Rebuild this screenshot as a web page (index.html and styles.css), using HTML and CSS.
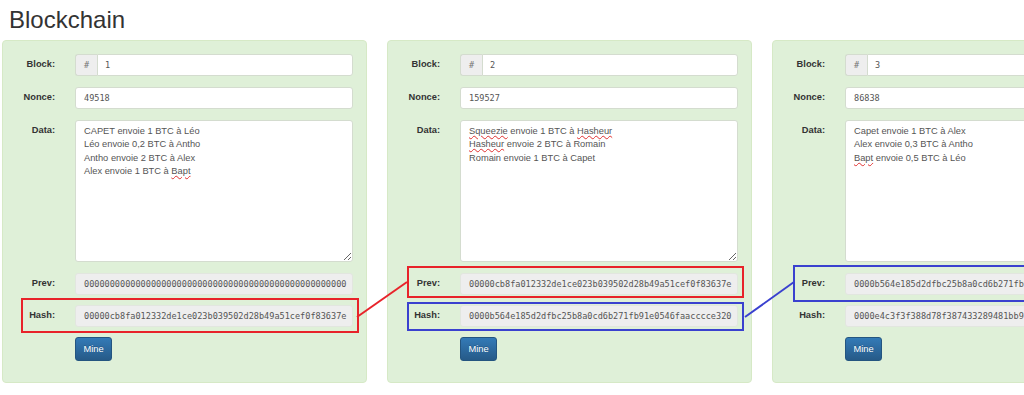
FILE: index.html
```html
<!DOCTYPE html>
<html lang="fr">

<head>
  <meta charset="UTF-8" />
  <meta name="viewport" content="width=device-width, initial-scale=1.0" />
  <title>Blockchain</title>
  <link rel="stylesheet" href="styles.css">
</head>

<body>
  <div class="page">
    <h1>Blockchain</h1>

    <!-- Chain of blocks -->
    <div class="chain">

      <div class="block">
        <div class="row">
          <label>Block:</label>
          <div class="input-group">
            <span class="addon">#</span>
            <input type="text" class="field mono" value="1">
          </div>
        </div>
        <div class="row">
          <label>Nonce:</label>
          <input type="text" class="field mono" value="49518">
        </div>
        <div class="row">
          <label>Data:</label>
          <div class="data">CAPET envoie 1 BTC à Léo<br>Léo envoie 0,2 BTC à Antho<br>Antho envoie 2 BTC à Alex<br>Alex envoie 1 BTC à <span class="typo">Bapt</span></div>
        </div>
        <div class="row prev">
          <label>Prev:</label>
          <input type="text" class="field mono" readonly value="000000000000000000000000000000000000000000000000000">
        </div>
        <div class="row hash mark red">
          <label>Hash:</label>
          <input type="text" class="field mono" readonly value="00000cb8fa012332de1ce023b039502d28b49a51cef0f83637e">
        </div>
        <button class="btn-mine">Mine</button>
      </div>

      <div class="block">
        <div class="row">
          <label>Block:</label>
          <div class="input-group">
            <span class="addon">#</span>
            <input type="text" class="field mono" value="2">
          </div>
        </div>
        <div class="row">
          <label>Nonce:</label>
          <input type="text" class="field mono" value="159527">
        </div>
        <div class="row">
          <label>Data:</label>
          <div class="data"><span class="typo">Squeezie</span> envoie 1 BTC à <span class="typo">Hasheur</span><br><span class="typo">Hasheur</span> envoie 2 BTC à Romain<br>Romain envoie 1 BTC à Capet</div>
        </div>
        <div class="row prev mark red upper">
          <label>Prev:</label>
          <input type="text" class="field mono" readonly value="00000cb8fa012332de1ce023b039502d28b49a51cef0f83637e">
        </div>
        <div class="row hash mark blue lower">
          <label>Hash:</label>
          <input type="text" class="field mono" readonly value="0000b564e185d2dfbc25b8a0cd6b271fb91e0546faacccce320">
        </div>
        <button class="btn-mine">Mine</button>
      </div>

      <div class="block">
        <div class="row">
          <label>Block:</label>
          <div class="input-group">
            <span class="addon">#</span>
            <input type="text" class="field mono" value="3">
          </div>
        </div>
        <div class="row">
          <label>Nonce:</label>
          <input type="text" class="field mono" value="86838">
        </div>
        <div class="row">
          <label>Data:</label>
          <div class="data">Capet envoie 1 BTC à Alex<br>Alex envoie 0,3 BTC à Antho<br><span class="typo">Bapt</span> envoie 0,5 BTC à Léo</div>
        </div>
        <div class="row prev mark blue wide">
          <label>Prev:</label>
          <input type="text" class="field mono" readonly value="0000b564e185d2dfbc25b8a0cd6b271fb91e0546faacccce320">
        </div>
        <div class="row hash">
          <label>Hash:</label>
          <input type="text" class="field mono" readonly value="0000e4c3f3f388d78f387433289481bb9c52e07a1d64f3b8e9a">
        </div>
        <button class="btn-mine">Mine</button>
      </div>

    </div>

    <!-- Links between hash and next prev -->
    <svg class="links" width="1024" height="395" viewBox="0 0 1024 395">
      <line x1="357" y1="317" x2="407" y2="282" stroke="#e8232a" stroke-width="2" />
      <line x1="745" y1="317" x2="794" y2="282" stroke="#3a41cf" stroke-width="2" />
    </svg>
  </div>
</body>

</html>
```

FILE: styles.css
```css
body {
  font-family: "Liberation Sans", Arial, sans-serif;
  background-color: #fff;
  margin: 0;
  padding: 0;
  color: #333;
  overflow: hidden;
}

.page {
  position: relative;
  width: 1024px;
  height: 395px;
  padding-top: 7px;
  box-sizing: border-box;
}

h1 {
  margin: 0 0 7px 9px;
  font-size: 24px;
  line-height: 26px;
  font-weight: normal;
  color: #333;
}

/* Row of blocks */
.chain {
  display: flex;
  gap: 20px;
  padding-left: 2px;
  overflow: hidden;
}

.block {
  flex: 0 0 365px;
  box-sizing: border-box;
  background-color: #dff0d8;
  border: 1px solid #d6e9c6;
  border-radius: 4px;
  padding: 13px 13px 21px 0;
}

.row {
  position: relative;
  display: flex;
  gap: 20px;
  margin-bottom: 11px;
}

.row.prev,
.row.hash {
  margin-bottom: 10px;
}

.row label {
  flex: 0 0 52px;
  text-align: right;
  font-size: 9.3px;
  line-height: 13px;
  font-weight: bold;
  padding-top: 4px;
  color: #333;
}

/* Inputs */
.field {
  flex: 1;
  min-width: 0;
  height: 22px;
  box-sizing: border-box;
  border: 1px solid #d4dccf;
  border-radius: 3px;
  background: #fff;
  padding: 0 3px 0 8px;
  color: #555;
  outline: none;
}

.field[readonly] {
  background: #eee;
  border-color: #e2e6df;
}

.mono {
  font-family: "DejaVu Sans Mono", monospace;
  font-size: 8.55px;
}

.input-group {
  flex: 1;
  display: flex;
}

.input-group .field {
  border-radius: 0 3px 3px 0;
  padding-left: 7px;
}

.addon {
  flex: 0 0 22px;
  height: 22px;
  box-sizing: border-box;
  background: #eee;
  border: 1px solid #d4dccf;
  border-right: none;
  border-radius: 3px 0 0 3px;
  color: #777;
  font-family: "DejaVu Sans Mono", monospace;
  font-size: 8.6px;
  line-height: 20px;
  text-align: center;
}

.data {
  flex: 1;
  height: 142px;
  box-sizing: border-box;
  background: #fff;
  border: 1px solid #d4dccf;
  border-radius: 3px;
  padding: 4px 8px;
  font-size: 9.3px;
  line-height: 13.3px;
  color: #555;
  overflow: auto;
  resize: vertical;
}

.typo {
  text-decoration: underline wavy #e03030;
  text-decoration-thickness: 1px;
  text-underline-offset: 1px;
}

/* Mine button */
.btn-mine {
  margin-left: 72px;
  width: 37px;
  height: 24px;
  padding: 0;
  border: 1px solid #245580;
  border-radius: 3px;
  background: linear-gradient(to bottom, #337ab7 0, #265a88 100%);
  color: #fff;
  font-family: "Liberation Sans", Arial, sans-serif;
  font-size: 9.3px;
  text-shadow: 0 -1px 0 rgba(0, 0, 0, 0.2);
  cursor: pointer;
}

/* Highlight frames */
.mark::before {
  content: "";
  position: absolute;
  left: 18px;
  right: -6px;
  top: -7px;
  bottom: -6px;
  border: 2px solid;
  pointer-events: none;
}

.mark.red::before {
  border-color: #e8232a;
}

.mark.blue::before {
  border-color: #3a41cf;
}

.mark.upper::before {
  left: 19px;
  bottom: -3px;
}

.mark.lower::before {
  left: 19px;
  top: -3px;
  bottom: -4px;
}

.mark.wide::before {
  left: 20px;
  top: -8px;
  bottom: -7px;
}

.links {
  position: absolute;
  top: 0;
  left: 0;
  pointer-events: none;
}
```
